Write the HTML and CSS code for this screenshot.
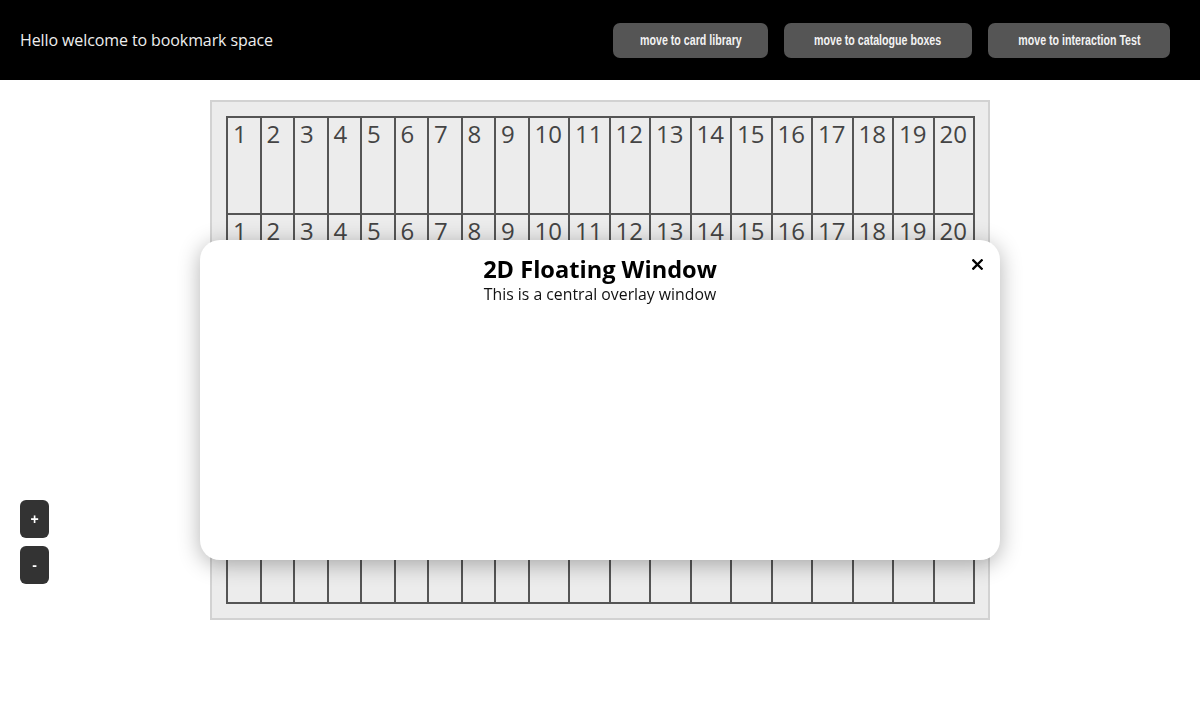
FILE: index.html
```html
<!DOCTYPE html>
<html lang="en">
<head>
<meta charset="utf-8">
<title>bookmark space</title>
<link rel="stylesheet" href="styles.css">
</head>
<body>
<header class="topbar">
  <div class="welcome">Hello welcome to bookmark space</div>
  <nav class="nav">
    <button class="nav-btn"><span class="nav-label">move to card library</span></button>
    <button class="nav-btn"><span class="nav-label">move to catalogue boxes</span></button>
    <button class="nav-btn"><span class="nav-label">move to interaction Test</span></button>
  </nav>
</header>
<main class="space">
  <div class="board">
    <div class="grid" id="grid"></div>
  </div>
</main>
<div class="zoom">
  <button class="zoom-btn">+</button>
  <button class="zoom-btn">-</button>
</div>
<div class="overlay">
  <div class="modal">
    <button class="close" aria-label="close">
      <svg width="11" height="11" viewBox="0 0 11 11"><path d="M1.3 1.3 L9.7 9.7 M9.7 1.3 L1.3 9.7" stroke="#000" stroke-width="2.3" stroke-linecap="square"/></svg>
    </button>
    <h2 class="modal-title">2D Floating Window</h2>
    <p class="modal-sub">This is a central overlay window</p>
  </div>
</div>
<script>
  var g = document.getElementById('grid');
  var html = '';
  for (var r = 0; r < 5; r++) {
    for (var c = 1; c <= 20; c++) {
      html += '<div class="cell">' + c + '</div>';
    }
  }
  g.innerHTML = html;
</script>
</body>
</html>
```
FILE: styles.css
```css
* { box-sizing: border-box; }
html, body { margin: 0; padding: 0; }
body {
  background: #fff;
  font-family: "Open Sans", "Noto Sans", sans-serif;
  width: 1200px;
  height: 720px;
  overflow: hidden;
}
.topbar {
  height: 80px;
  background: #000;
  display: flex;
  align-items: center;
  justify-content: space-between;
  padding: 0 30px 0 20px;
}
.welcome {
  color: #eee;
  font-size: 16px;
  letter-spacing: -0.1px;
}
.nav { display: flex; gap: 16px; }
.nav-btn {
  height: 35px;
  padding: 0 10.5px;
  border: none;
  border-radius: 7px;
  background: #555;
  color: #f2f2f2;
  font-family: "Liberation Sans", Arial, sans-serif;
  font-weight: bold;
  font-size: 14px;
  display: flex;
  align-items: center;
  justify-content: center;
}
.nav-label {
  display: inline-block;
  transform: scaleX(0.76);
  white-space: nowrap;
}
.space {
  display: flex;
  justify-content: center;
  padding-top: 20px;
}
.board {
  border: 2px solid #d2d2d2;
  background: #ececec;
  padding: 14px 13px 14px 14px;
}
.grid {
  display: grid;
  grid-template-columns: repeat(9, 33.5px) repeat(11, 40.5px);
  grid-auto-rows: 97.2px;
  border: 1px solid #555;
}
.cell {
  border: 1px solid #555;
  background: #ececec;
  color: #444;
  font-size: 24px;
  line-height: 32px;
  padding-left: 5px;
  font-family: "Open Sans", "Noto Sans", sans-serif;
}
.zoom {
  position: fixed;
  left: 20px;
  top: 500px;
  display: flex;
  flex-direction: column;
  gap: 8px;
}
.zoom-btn {
  width: 29px;
  height: 38px;
  border: none;
  border-radius: 6px;
  background: #333;
  color: #fff;
  font-size: 14px;
  font-weight: bold;
  font-family: "Liberation Sans", sans-serif;
  padding: 0;
}
.overlay {
  position: fixed;
  left: 0;
  top: 80px;
  width: 1200px;
  height: 640px;
  display: flex;
  align-items: center;
  justify-content: center;
}
.modal {
  position: relative;
  width: 800px;
  height: 320px;
  background: #fff;
  border-radius: 20px;
  box-shadow: 0 4px 22px rgba(0, 0, 0, 0.3);
  text-align: center;
  padding-top: 14px;
}
.close {
  position: absolute;
  top: 14px;
  right: 13px;
  width: 20px;
  height: 20px;
  padding: 0;
  border: none;
  background: none;
  display: flex;
  align-items: center;
  justify-content: center;
}
.modal-title {
  margin: 0;
  font-size: 23.6px;
  font-weight: bold;
  line-height: 30px;
  color: #000;
}
.modal-sub {
  margin: 0;
  font-size: 15.8px;
  line-height: 20px;
  color: #111;
}
```
